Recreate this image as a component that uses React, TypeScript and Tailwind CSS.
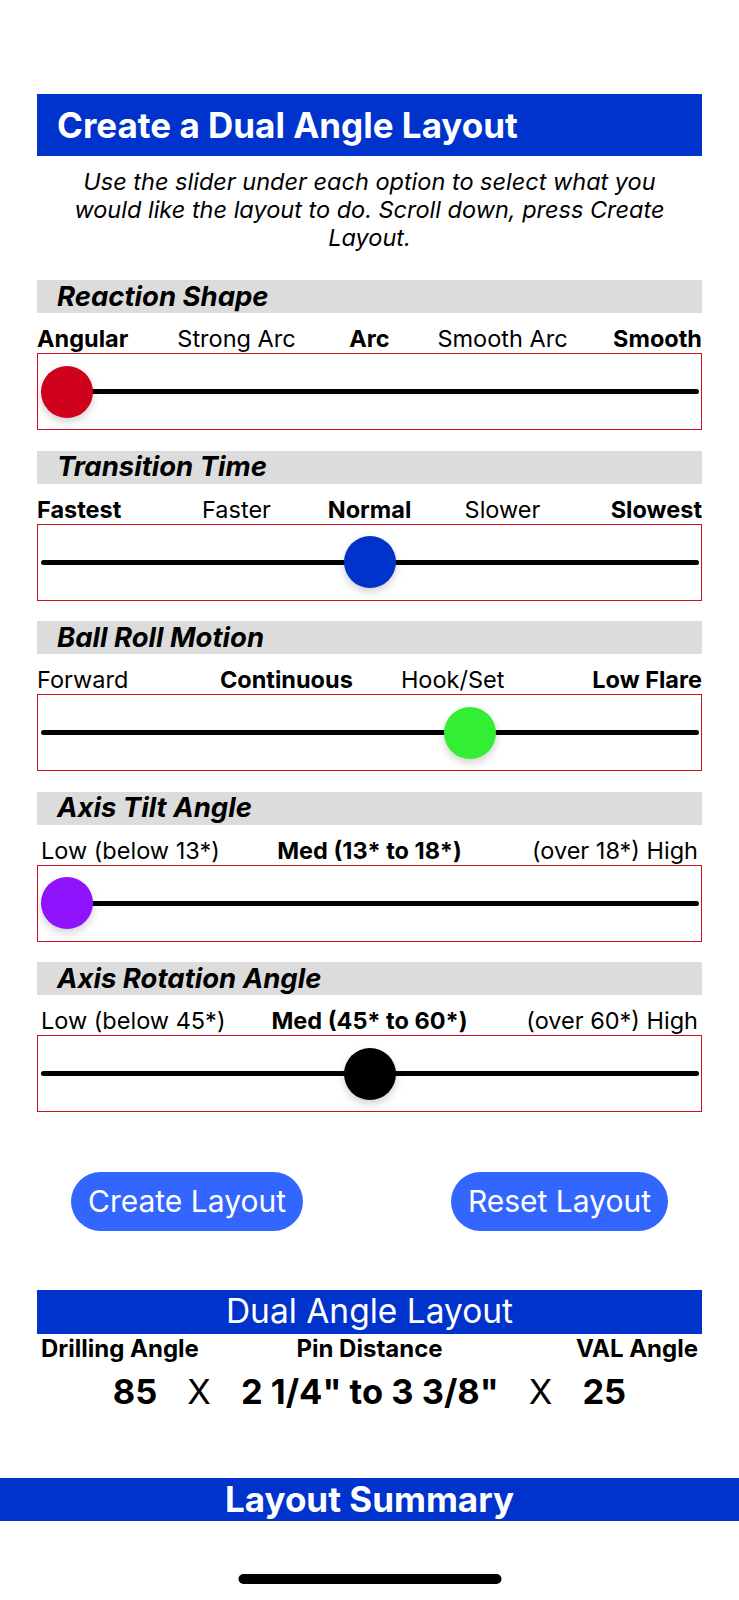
import React from "react"

type SliderProps = {
  title: string
  labels: { text: string; bold?: boolean }[]
  value: number
  steps: number
  color: string
  inset?: boolean
}

const Section = ({ title, labels, value, steps, color, inset }: SliderProps) => {
  const pct = value / (steps - 1)
  const last = labels.length - 1
  return (
    <div>
      <div className="h-[33px] bg-[#dcdcdc] pl-[20px] flex items-center">
        <h2 className="text-[27.5px] font-bold italic leading-none text-black">{title}</h2>
      </div>
      <div className={`mt-[13px] flex text-[23.5px] leading-[26px] text-black ${inset ? "px-[4px]" : ""}`}>
        {labels.map((l, i) => (
          <div
            key={l.text}
            className={`flex-1 whitespace-nowrap ${i === 0 ? "text-left" : i === last ? "text-right" : "text-center"} ${
              l.bold ? "font-bold" : "font-normal"
            }`}
          >
            {l.text}
          </div>
        ))}
      </div>
      <div className="mt-[1px] h-[77px] border-[1.5px] border-[#cc1122] px-[2.5px]">
        <div className="relative h-full flex items-center">
          <div className="h-[5px] w-full rounded-full bg-black" />
          <div
            className="absolute top-1/2 -mt-[26px] size-[52px] rounded-full shadow-[0_4px_8px_rgba(0,0,0,0.18)]"
            style={{ left: `calc(${pct} * (100% - 52px))`, backgroundColor: color }}
          />
        </div>
      </div>
    </div>
  )
}

export default function App() {
  return (
    <div className="relative min-h-[1600px] bg-white font-['Inter','Noto_Sans',sans-serif] text-black">
      <div className="pt-[94px] px-[37px]">
        <div className="h-[62px] bg-[#0033cc] pl-[20px] flex items-center">
          <h1 className="text-[35px] font-bold text-white leading-none">Create a Dual Angle Layout</h1>
        </div>
        <p className="mt-[12px] text-center italic text-[23.5px] leading-[28px]">
          Use the slider under each option to select what you
          <br />
          would like the layout to do. Scroll down, press Create
          <br />
          Layout.
        </p>

        <div className="mt-[28px] flex flex-col gap-[20.5px]">
          <Section
            title="Reaction Shape"
            value={0}
            steps={5}
            color="#d0021b"
            labels={[
              { text: "Angular", bold: true },
              { text: "Strong Arc" },
              { text: "Arc", bold: true },
              { text: "Smooth Arc" },
              { text: "Smooth", bold: true },
            ]}
          />
          <Section
            title="Transition Time"
            value={2}
            steps={5}
            color="#0033cc"
            labels={[
              { text: "Fastest", bold: true },
              { text: "Faster" },
              { text: "Normal", bold: true },
              { text: "Slower" },
              { text: "Slowest", bold: true },
            ]}
          />
          <Section
            title="Ball Roll Motion"
            value={2}
            steps={4}
            color="#33ee33"
            labels={[
              { text: "Forward" },
              { text: "Continuous", bold: true },
              { text: "Hook/Set" },
              { text: "Low Flare", bold: true },
            ]}
          />
          <Section
            title="Axis Tilt Angle"
            value={0}
            steps={3}
            color="#9013fe"
            inset
            labels={[
              { text: "Low (below 13*)" },
              { text: "Med (13* to 18*)", bold: true },
              { text: "(over 18*) High" },
            ]}
          />
          <Section
            title="Axis Rotation Angle"
            value={1}
            steps={3}
            color="#000000"
            inset
            labels={[
              { text: "Low (below 45*)" },
              { text: "Med (45* to 60*)", bold: true },
              { text: "(over 60*) High" },
            ]}
          />
        </div>
      </div>

      <div className="mt-[60px] px-[71px] flex justify-between">
        <button className="h-[59px] px-[17px] rounded-full bg-[#3366ff] text-white text-[30px]">Create Layout</button>
        <button className="h-[59px] px-[17px] rounded-full bg-[#3366ff] text-white text-[30px]">Reset Layout</button>
      </div>

      <div className="mt-[59px] px-[37px]">
        <div className="h-[44px] bg-[#0033cc] flex items-center justify-center">
          <span className="text-[33.5px] text-white leading-none">Dual Angle Layout</span>
        </div>
        <div className="grid grid-cols-3 px-[4px] text-[24px] font-bold leading-[30px] whitespace-nowrap">
          <span className="text-left">Drilling Angle</span>
          <span className="text-center">Pin Distance</span>
          <span className="text-right">VAL Angle</span>
        </div>
        <div className="mt-[8px] flex justify-center gap-[30px] text-[34.5px] leading-[40px]">
          <span className="font-bold">85</span>
          <span>X</span>
          <span className="font-bold">2 1/4" to 3 3/8"</span>
          <span>X</span>
          <span className="font-bold">25</span>
        </div>
      </div>

      <div className="mt-[66px] h-[43px] bg-[#0033cc] flex items-center justify-center">
        <span className="text-[35px] font-bold text-white leading-none">Layout Summary</span>
      </div>

      <div className="absolute bottom-[16px] left-1/2 -translate-x-1/2 h-[10px] w-[263px] rounded-full bg-black" />
    </div>
  )
}
